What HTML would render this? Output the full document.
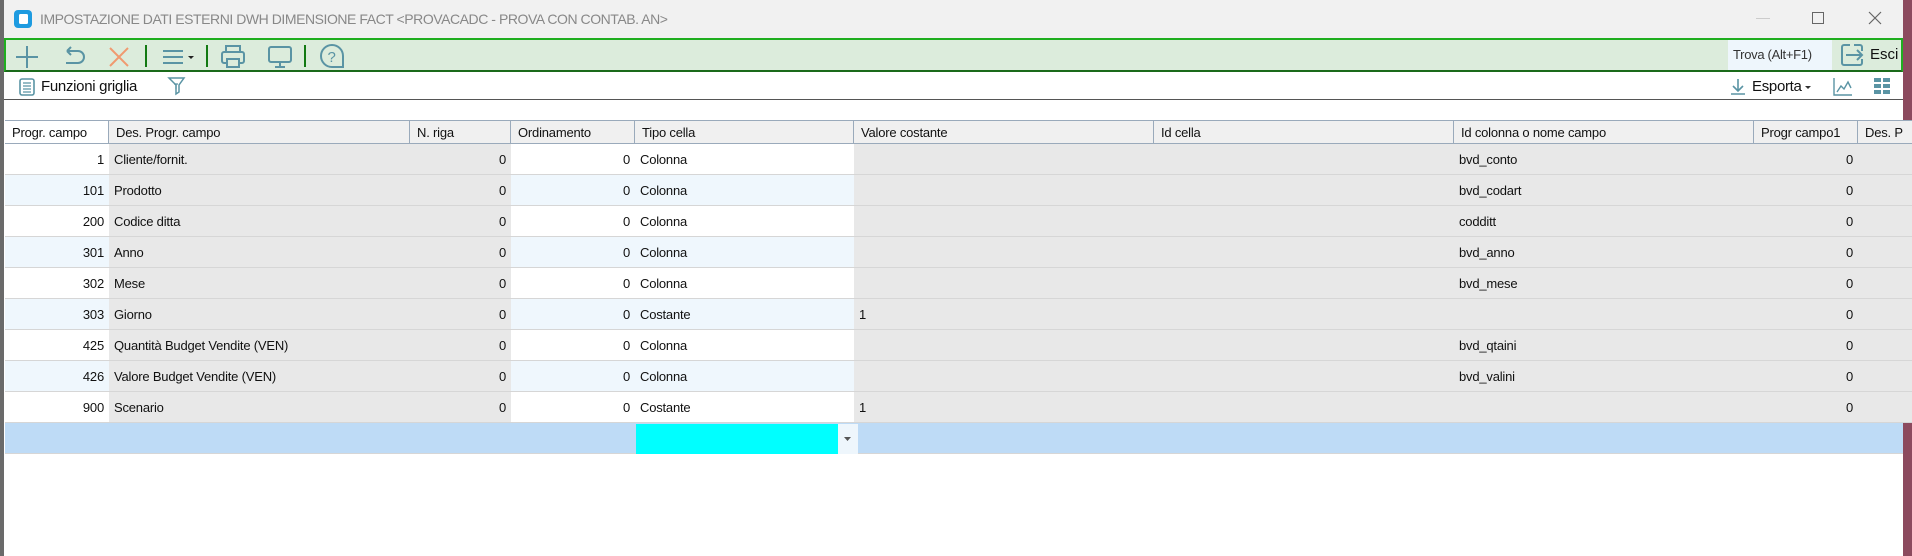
<!DOCTYPE html>
<html><head><meta charset="utf-8"><style>
*{margin:0;padding:0;box-sizing:border-box}
body{width:1912px;height:556px;overflow:hidden;background:#8c4a5e;font-family:"Liberation Sans",sans-serif;font-size:13px;color:#111;position:relative}
.win{position:absolute;left:0;top:0;width:1903px;height:556px;background:#fff;border-left:4px solid #6a6a6a}
.title{position:absolute;left:0;top:0;right:0;height:38px;background:#f1f1f1}
.title .t{position:absolute;left:36px;top:11px;font-size:14px;color:#888;letter-spacing:-0.45px}
.tb{position:absolute;left:0;right:0;top:38px;height:34px;background:#dcecdc;border-top:2px solid #1fae1f;border-bottom:2px solid #1a6a1a;border-left:2px solid #1fae1f;border-right:2px solid #1fae1f}
.tb2{position:absolute;left:0;right:0;top:72px;height:28px;background:#fff;border-bottom:1px solid #555}
.sep{position:absolute;top:5px;width:2px;height:22px;background:#137a13}
svg{position:absolute}
.c{position:absolute;height:31px;line-height:32px;padding:0 5px;white-space:nowrap;overflow:hidden;border-bottom:1px solid #d6d6d6;letter-spacing:-0.2px}
.h{position:absolute;top:120px;height:24px;line-height:24px;padding:0 7px;background:#f0f0f0;border-right:1px solid #9aaabb;border-top:1px solid #9aaabb;border-bottom:1px solid #9aaabb;white-space:nowrap;overflow:hidden;letter-spacing:-0.2px}
.r{text-align:right}
</style></head><body>
<div class="win">
<div class="title">
<svg style="left:9px;top:9px" width="20" height="20"><rect x="1" y="1" width="18" height="18" rx="4" fill="#1e9be0"/><rect x="6" y="5" width="9" height="10" rx="1.5" fill="#fff"/></svg>
<div class="t">IMPOSTAZIONE DATI ESTERNI DWH DIMENSIONE FACT &lt;PROVACADC - PROVA CON CONTAB. AN&gt;</div>
<div style="position:absolute;left:1752px;top:18px;width:14px;height:1px;background:#ccc"></div>
<div style="position:absolute;left:1808px;top:12px;width:12px;height:12px;border:1px solid #666"></div>
<svg style="left:1864px;top:11px" width="14" height="14"><path d="M1 1L13 13M13 1L1 13" stroke="#666" stroke-width="1.2"/></svg>
</div>
<div class="tb">
<svg style="left:8px;top:4px" width="26" height="26"><path d="M13 2V24M2 13H24" stroke="#5a94a4" stroke-width="2"/></svg>
<svg style="left:55px;top:5px" width="26" height="24"><path d="M6 6H17A6 6 0 0 1 17 18H5M6 6L10 2M6 6L10 10" stroke="#5a94a4" stroke-width="2" fill="none"/></svg>
<svg style="left:101px;top:5px" width="24" height="24"><path d="M3 3L21 21M21 3L3 21" stroke="#f09a70" stroke-width="2"/></svg>
<div class="sep" style="left:139px"></div>
<svg style="left:155px;top:6px" width="36" height="22"><path d="M2 5H22M2 11H22M2 17H22" stroke="#5a94a4" stroke-width="2"/><path d="M27 10H33L30 13Z" fill="#222"/></svg>
<div class="sep" style="left:200px"></div>
<svg style="left:214px;top:4px" width="26" height="26"><rect x="6" y="2" width="14" height="6" fill="none" stroke="#5a94a4" stroke-width="2"/><rect x="2" y="8" width="22" height="11" rx="2" fill="none" stroke="#5a94a4" stroke-width="2"/><rect x="7" y="15" width="12" height="8" fill="#dcecdc" stroke="#5a94a4" stroke-width="2"/></svg>
<svg style="left:261px;top:4px" width="26" height="26"><rect x="2" y="3" width="22" height="15" rx="2" fill="none" stroke="#5a94a4" stroke-width="2"/><path d="M13 18V22M8 23H18" stroke="#5a94a4" stroke-width="2"/></svg>
<div class="sep" style="left:298px"></div>
<svg style="left:313px;top:3px" width="26" height="28"><path d="M13 2A11 11 0 0 1 24 13V24H13A11 11 0 0 1 13 2Z" fill="none" stroke="#5a94a4" stroke-width="2"/><text x="8.5" y="19" font-size="15" fill="#5a94a4" font-family="Liberation Sans">?</text></svg>
<div style="position:absolute;left:1722px;top:0;width:104px;height:30px;background:#eef6fc;font-size:13px;color:#333;line-height:29px;padding-left:5px;letter-spacing:-0.3px">Trova (Alt+F1)</div>
<svg style="left:1834px;top:3px" width="26" height="26"><path d="M10 2H4A2 2 0 0 0 2 4V20A2 2 0 0 0 4 22H20A2 2 0 0 0 22 20V16M22 8V4A2 2 0 0 0 20 2H14" fill="none" stroke="#5a94a4" stroke-width="2"/><path d="M6 12H22M17 7L22 12L17 17" fill="none" stroke="#5a94a4" stroke-width="2"/></svg>
<div style="position:absolute;left:1864px;top:6px;font-size:15px">Esci</div>
</div>
<div class="tb2">
<svg style="left:14px;top:5px" width="18" height="20"><rect x="2" y="2" width="14" height="16" rx="2" fill="none" stroke="#5a94a4" stroke-width="1.6"/><path d="M5 6H13M5 9H13M5 12H13M5 15H13" stroke="#5a94a4" stroke-width="1.2"/></svg>
<div style="position:absolute;left:37px;top:6px;font-size:15px;letter-spacing:-0.3px">Funzioni griglia</div>
<svg style="left:163px;top:3px" width="20" height="22"><path d="M2 3H17L12 10V17L9 19V10Z" fill="none" stroke="#5a94a4" stroke-width="1.5"/><path d="M7 9H11M9 9V14" stroke="#5a94a4" stroke-width="1.2"/></svg>
<svg style="left:1725px;top:5px" width="18" height="20"><path d="M9 2V14M4 9L9 14L14 9M2 17H16" fill="none" stroke="#5a94a4" stroke-width="1.6"/></svg>
<div style="position:absolute;left:1748px;top:6px;font-size:15px;letter-spacing:-0.3px">Esporta</div>
<svg style="left:1801px;top:13px" width="8" height="6"><path d="M0 1H6L3 4Z" fill="#333"/></svg>
<svg style="left:1828px;top:4px" width="22" height="22"><path d="M2 2V19H20" fill="none" stroke="#5a94a4" stroke-width="1.4"/><path d="M5 16L9 10L12 13L16 6L19 12" fill="none" stroke="#5a94a4" stroke-width="1.4"/></svg>
<svg style="left:1870px;top:6px" width="16" height="16"><g fill="#5a94a4"><rect x="0" y="0" width="7" height="4"/><rect x="9" y="0" width="7" height="4"/><rect x="0" y="6" width="7" height="4"/><rect x="9" y="6" width="7" height="4"/><rect x="0" y="12" width="7" height="4"/><rect x="9" y="12" width="7" height="4"/></g></svg>
</div>
<div id="grid"></div>
</div>
<script>
var cols=[1,105,406,507,631,850,1150,1450,1750,1854,1910];
var hd=["Progr. campo","Des. Progr. campo","N. riga","Ordinamento","Tipo cella","Valore costante","Id cella","Id colonna o nome campo","Progr campo1","Des. P"];
var rows=[["1","Cliente/fornit.","0","0","Colonna","","","bvd_conto","0"],["101","Prodotto","0","0","Colonna","","","bvd_codart","0"],["200","Codice ditta","0","0","Colonna","","","codditt","0"],["301","Anno","0","0","Colonna","","","bvd_anno","0"],["302","Mese","0","0","Colonna","","","bvd_mese","0"],["303","Giorno","0","0","Costante","1","","","0"],["425","Quantità Budget Vendite (VEN)","0","0","Colonna","","","bvd_qtaini","0"],["426","Valore Budget Vendite (VEN)","0","0","Colonna","","","bvd_valini","0"],["900","Scenario","0","0","Costante","1","","","0"]];
var right=[1,0,1,1,0,0,0,0,1,0];
var white=[1,0,0,1,1,0,0,0,0,0];
var h="";
for(var i=0;i<10;i++){var w=cols[i+1]-cols[i];h+='<div class="h" style="left:'+cols[i]+'px;width:'+w+'px;'+(i==0?'background:#fff;':'')+'">'+hd[i]+'</div>';}
for(var r=0;r<9;r++){var y=144+r*31;for(var i=0;i<10;i++){var w=cols[i+1]-cols[i];var bg=white[i]?(r%2?'#eff7fd':'#fff'):'#e8e8e8';var t=rows[r][i]||'';h+='<div class="c'+(right[i]?' r':'')+'" style="left:'+cols[i]+'px;top:'+y+'px;width:'+w+'px;background:'+bg+'">'+t+'</div>';}}
h+='<div style="position:absolute;left:1px;top:423px;width:1898px;height:31px;background:#bedbf6;border-bottom:1px solid #d6d6d6"></div>';
h+='<div style="position:absolute;left:632px;top:424px;width:202px;height:30px;background:#00ffff"></div>';
h+='<div style="position:absolute;left:834px;top:424px;width:20px;height:30px;background:#eef6fc"></div>';
h+='<svg style="left:840px;top:436px" width="8" height="6"><path d="M0 1H7L3.5 5Z" fill="#555"/></svg>';
document.getElementById('grid').innerHTML=h;
</script>
</body></html>
